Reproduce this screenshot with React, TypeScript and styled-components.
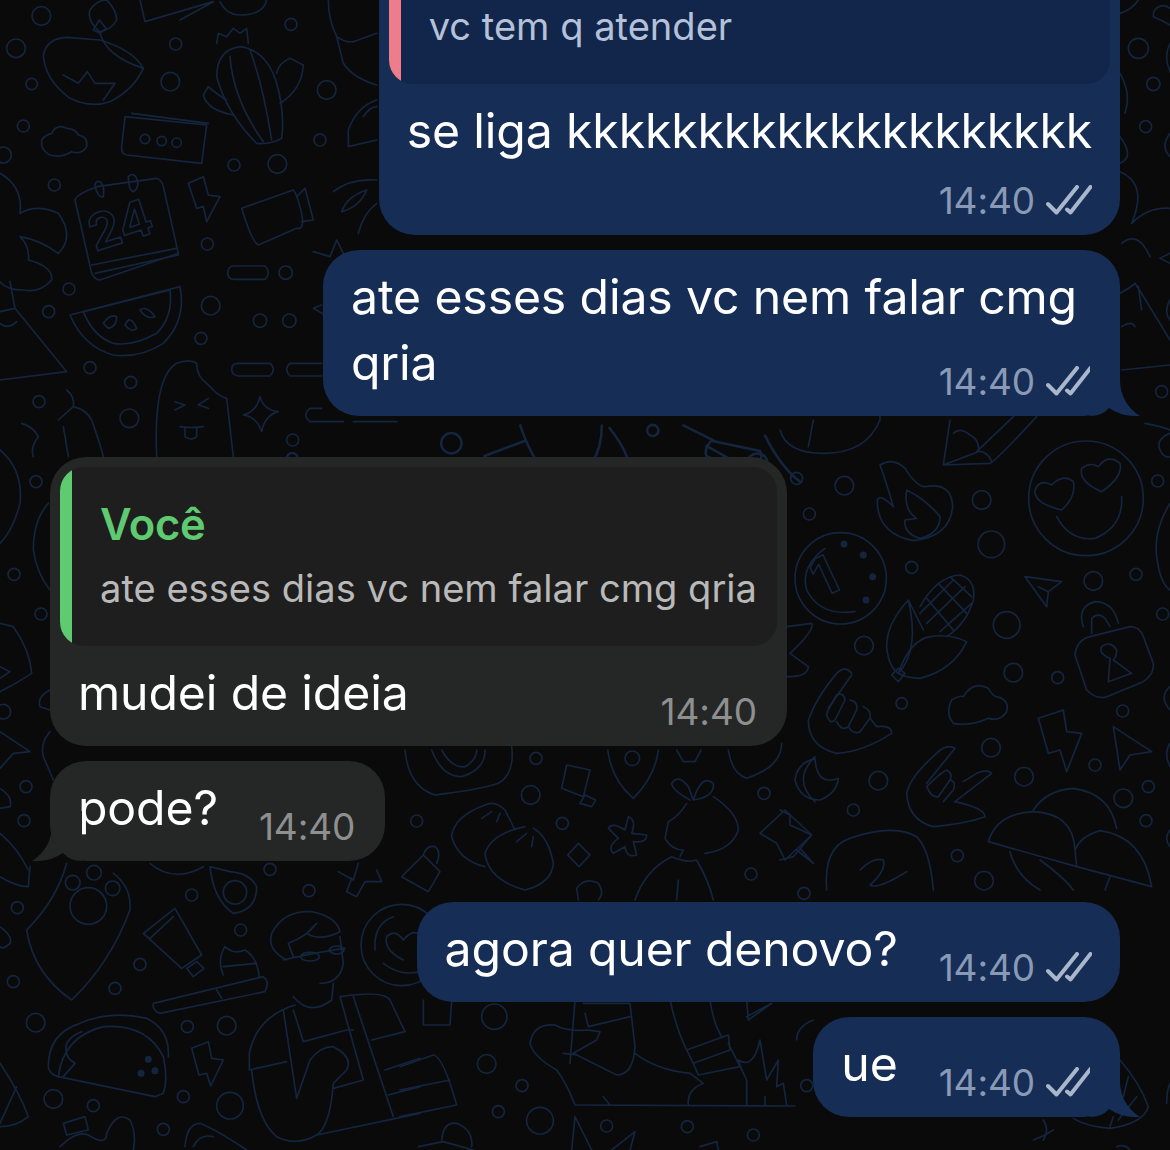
import React from 'react';
import styled, { createGlobalStyle } from 'styled-components';

type Side = 'in' | 'out';
type PatternGroup = {
    at: [number, number];
    scale?: number;
    circles?: Array<[number, number, number]>;
    dots?: Array<[number, number, number]>;
    paths: string[];
};

const THIRD = 1 / 3;

// doodles of the chat wallpaper, each group in the coordinates of its own crop
const PATTERN: PatternGroup[] = [
    {
        at: [0, 0],
        circles: [[124, 48, 28], [48, 145, 28], [95, 252, 17], [527, 132, 18], [511, 245, 28], [873, 73, 18], [980, 270, 28], [70, 378, 18], [702, 495, 18], [832, 492, 28], [960, 420, 18], [163, 555, 18], [622, 732, 18], [857, 818, 20], [207, 867, 18], [146, 935, 18], [632, 917, 28], [780, 962, 20], [868, 962, 20], [603, 1015, 18], [270, 1103, 18], [392, 1147, 18], [117, 1205, 18], [388, 1255, 28], [878, 1320, 18], [435, 417, 14], [485, 423, 14], [530, 428, 14], [10, 465, 24]],
        paths: [
            'M130 165Q140 115 200 112L300 120Q400 150 430 205Q400 270 330 305Q270 325 210 295Q135 240 130 165Z',
            'M298 95Q260 60 270 30Q290 0 320 0Q350 30 350 60Q335 90 298 95',
            'M280 90L298 60L318 85L300 100Z',
            'M190 225L235 250L262 215L285 250L345 250L310 300',
            'M300 100Q320 170 430 205',
            'M420 0L435 65L640 5M540 60L640 5M660 5Q680 45 720 45Q790 45 800 0',
            'M770 430Q680 340 650 230Q650 150 720 140Q800 150 830 250Q855 340 845 415Q810 435 770 430Z',
            'M690 170Q700 300 790 425M750 150Q790 260 815 420',
            'M700 345Q620 330 610 285L625 260Q660 290 680 300M840 310Q905 270 910 195L870 175Q835 190 830 220',
            'M650 130L655 100L680 110L700 85L720 100L740 85L745 130',
            'M375 350L620 375L605 490L380 465Q362 460 365 440ZM395 340L625 370',
            'M150 465Q120 450 125 420Q135 405 155 400Q170 370 200 385Q225 385 235 405Q265 410 260 440Q245 465 215 455Q180 475 150 465Z',
            'M225 600Q225 585 290 560L470 535Q485 540 490 560L535 760L300 840Q285 840 275 820Z',
            'M275 795L530 745M285 820L535 765',
            'M285 560Q285 540 300 545Q315 555 310 590Q295 595 285 560M385 530Q400 515 410 535Q420 565 400 575Q385 570 385 530',
            'M565 550L610 530L625 585L660 590L620 665L610 620L590 625Z',
            'M725 625L880 570Q890 580 905 640Q915 690 890 685L775 735Q755 725 725 625ZM890 590L915 565L940 660L905 665',
            'M1130 300Q1070 320 1045 390L1045 440L1130 420M1090 350Q1110 320 1130 320',
            'M1000 575Q1050 535 1130 540M1025 635Q1040 590 1100 570Q1080 620 1025 635M1075 700Q1090 640 1130 610',
            'M940 755L990 770L1010 720L1040 780',
            'M985 0Q985 60 1010 110Q1040 130 1060 125L1130 100M1030 190Q1060 235 1130 255M1010 110L1030 190',
            'M940 925L975 945M940 925L965 915',
            'M210 945L540 860Q560 960 490 1030Q420 1075 340 1065Q250 1040 210 945Z',
            'M250 935L510 870Q520 950 470 1000Q400 1040 340 1030Q280 1010 250 935Z',
            'M310 970Q330 940 350 950Q350 980 325 985ZM375 975Q390 940 410 985Q395 1000 375 975ZM420 930Q440 915 465 950Q440 960 420 930Z',
            'M0 520Q70 560 60 640M60 640Q110 610 175 640Q225 710 175 760Q120 720 60 710Q90 740 85 780M85 780Q160 800 155 840Q120 880 70 870Q20 870 0 845',
            'M0 935L45 925L200 1115L0 1140M30 845L45 925',
            'M0 970Q25 990 50 965',
            'M695 1108Q695 1090 715 1090L810 1090Q830 1108 810 1128L715 1128Q695 1125 695 1108ZM965 1090L870 1090Q850 1108 870 1128L965 1128',
            'M683 818Q683 798 703 798L795 798Q815 818 795 838L703 838Q683 838 683 818Z',
            'M965 1225L930 1225Q905 1245 930 1265L1030 1265M1060 1265L1190 1265',
            'M470 1370Q460 1130 530 1090Q570 1075 590 1090Q590 1130 620 1150L640 1170Q660 1190 680 1195Q690 1280 700 1370',
            'M525 1205L555 1215L525 1230M625 1195L595 1215L625 1225M540 1280Q570 1285 610 1280M555 1285L555 1310Q575 1325 590 1310L590 1285',
            'M780 1190Q790 1230 835 1235Q795 1245 785 1295Q770 1250 730 1245Q770 1235 780 1190Z',
            'M200 1170Q225 1190 220 1220Q260 1230 275 1260Q300 1330 310 1370M175 1260L220 1220M190 1280L205 1370',
            'M65 1270Q100 1280 115 1310Q90 1340 100 1370'
        ]
    },
    {
        at: [0, 405],
        scale: 0.51,
        circles: [[885, 75, 20], [573, 105, 11], [703, 138, 11], [1280, 50, 11], [1297, 140, 20], [1485, 115, 20]],
        paths: [
            'M735 155L735 135Q745 120 765 120L800 120Q815 130 815 155',
            'M1020 40Q1050 130 1100 155Q1180 130 1180 40M950 100L1030 70M950 100L985 155M1195 45Q1240 100 1240 155',
            'M1385 80L1475 130Q1500 110 1490 90L1395 70Q1380 85 1385 100L1470 140',
            'M1340 40L1400 70M1500 60Q1530 120 1568 150'
        ]
    },
    {
        at: [780, 410],
        circles: [[50, 205, 18], [193, 227, 28], [88, 312, 18], [605, 270, 28], [634, 403, 40], [395, 472, 18], [940, 513, 28], [1068, 493, 18], [1133, 213, 18], [1148, 612, 18], [680, 645, 40], [252, 707, 28], [700, 788, 28], [833, 803, 18], [365, 880, 17], [1028, 903, 18], [633, 1013, 28], [945, 1065, 18], [732, 1100, 28], [295, 1112, 28], [1105, 1130, 18], [1030, 1165, 28], [220, 1200, 18], [1098, 1232, 18], [532, 1337, 18], [612, 1412, 28], [918, 265, 172], [182, 505, 137]],
        dots: [[192, 402, 8], [250, 435, 8], [278, 500, 8], [258, 570, 8]],
        paths: [
            'M845 300Q760 280 765 240Q780 205 815 225Q850 190 880 215Q890 260 845 300Z',
            'M965 245Q895 215 905 175Q930 155 955 170Q985 130 1020 160Q1030 200 965 245Z',
            'M830 320Q870 395 945 385Q1030 350 1025 260',
            'M300 165Q340 140 375 175Q410 230 435 230Q515 215 518 290Q510 380 400 392Q290 370 292 270Q300 250 340 290Q320 220 300 165Z',
            'M380 240Q440 270 480 320Q480 370 420 385Q370 370 375 330L410 325Q370 300 380 240',
            'M135 415Q60 470 80 540Q120 620 225 605',
            'M420 590Q470 500 540 495Q590 510 580 570Q560 640 500 680',
            'M440 565L520 660M475 520L560 610M510 500L575 560M420 610L520 510M440 640L555 530M480 665L575 580',
            'M385 570Q320 640 320 710Q325 770 355 790Q420 720 385 570ZM385 570L430 660',
            'M355 790Q390 690 450 680Q510 670 560 695Q520 780 420 805Q380 805 355 790M335 795L355 815L375 790L355 775Z',
            'M735 500L845 515L805 545L800 590ZM805 545L775 530',
            'M910 650Q890 590 945 575Q1000 575 1015 640M935 670L935 625Q955 605 975 625L990 650',
            'M885 735Q890 690 930 680L1050 650Q1080 650 1090 680L1120 760Q1125 790 1090 815L980 860Q950 870 920 840Z',
            'M990 745Q955 730 965 710Q990 690 1010 720Q1010 740 1000 750L1055 790L985 815Z',
            'M520 940Q495 910 515 870Q540 855 550 860Q580 810 625 835Q640 860 650 860Q690 870 680 905Q660 935 625 925Q570 950 520 940Z',
            'M775 925L850 900L860 965L905 970L860 1085L840 1020L805 1030Z',
            'M1000 950L1115 1025L1050 1035L1020 1080Z',
            'M215 790Q195 765 170 790Q110 860 85 930Q85 1010 170 1030Q250 1025 335 970Q335 945 290 950L270 925M215 795L145 895',
            'M170 855Q190 845 195 870L165 930Q150 945 140 915Q140 905 170 855ZM210 870Q235 875 230 900L205 950Q185 965 170 935M250 890Q275 900 270 925L240 965Q220 975 205 950',
            'M525 1015Q500 1000 470 1030Q390 1100 380 1150Q385 1230 460 1250Q560 1240 615 1220Q615 1195 525 1175M525 1015L440 1120',
            'M525 1175L635 1090Q620 1075 590 1090L550 1115M440 1130Q480 1090 500 1080Q520 1090 510 1110L475 1160Q455 1165 440 1130M510 1110Q530 1115 520 1140L490 1175',
            'M105 1045Q50 1060 45 1110Q60 1170 120 1170Q170 1150 175 1105Q110 1130 105 1045Z',
            'M0 1200L30 1215L30 1245L95 1275L40 1340L0 1350M60 1315L100 1360',
            'M140 1440Q130 1310 210 1285Q340 1240 410 1280Q450 1320 460 1440',
            'M240 1380Q280 1340 310 1350Q320 1380 270 1425Q290 1440 380 1385',
            'M760 1200Q800 1140 880 1135Q990 1150 1010 1255',
            'M625 1295Q650 1210 760 1205Q880 1210 885 1320L890 1370L625 1295Z',
            'M885 1320Q900 1280 960 1262Q1090 1280 1115 1430L890 1370',
            'M690 1325Q710 1400 780 1440M780 1350Q850 1400 880 1440M990 1400L975 1440',
            'M20 650L95 640Q105 660 30 730L85 770Q85 800 20 800',
            'M0 60Q20 130 130 130Q260 130 300 30L300 20M100 30L85 110',
            'M510 30L490 165L630 160Q650 150 770 20M520 70Q540 50 570 75Q600 90 595 125L490 165M590 125Q620 120 635 155M700 20L590 125',
            'M1170 280Q1120 360 1130 440Q1140 520 1170 540M1170 1000Q1150 1030 1170 1070M1170 1260Q1150 1285 1170 1310M1170 830Q1135 860 1170 900',
            'M1095 40Q1150 50 1170 60M1170 70Q1120 90 1145 130Q1160 145 1170 140'
        ]
    },
    {
        at: [0, 860],
        circles: [[52, 143, 18], [40, 365, 18], [420, 313, 18], [345, 385, 18], [575, 105, 18], [722, 210, 18], [927, 92, 18], [810, 28, 18], [107, 488, 28], [562, 500, 18], [680, 497, 28], [160, 717, 28], [280, 737, 18], [550, 710, 18], [690, 737, 40], [490, 808, 18], [218, 68, 22], [282, 38, 22], [338, 85, 22], [265, 138, 55], [705, 97, 35], [1205, 255, 122]],
        dots: [[445, 598, 8], [423, 640, 8], [465, 632, 8]],
        paths: [
            'M200 10Q170 120 80 210Q100 340 215 420Q330 310 390 150Q395 80 340 40',
            'M630 20Q640 120 700 160Q770 150 770 80Q750 40 690 35L630 20M450 10Q520 70 610 20',
            'M430 220L525 145L605 285L545 325ZM450 235L520 170M560 325L590 305L612 325L580 350Z',
            'M460 430L790 350Q810 365 795 395L480 460Q455 450 460 430ZM650 390L665 415',
            'M670 345Q650 300 675 260Q700 285 735 270Q770 290 778 350M670 320Q720 315 770 310',
            'M175 650Q190 530 310 500Q440 490 490 590Q505 660 490 700L465 710Z',
            'M145 620Q145 520 240 490Q330 450 440 475Q510 510 505 590M175 650Q145 640 145 620M190 650L225 610Q190 590 200 550Q215 525 245 515',
            'M575 565L625 545L635 595L670 600L632 678L620 640L597 645Z',
            'M860 300Q800 270 815 220Q850 150 935 155Q1010 170 1020 215Q960 245 920 220L950 190Q920 230 865 250L880 290',
            'M1020 230L1030 310Q1020 370 960 370M880 410Q930 470 995 420L1000 370',
            'M850 300Q930 280 1035 265M902 290a28 13 0 1 0 56 0a28 13 0 1 0 -56 0M988 270a22 12 0 1 0 44 0a22 12 0 1 0 -44 0',
            'M885 435Q770 470 748 580L748 630L860 605',
            'M850 450L890 715L930 600Q960 560 1000 560Q1060 590 1040 630L1000 670Q990 800 950 825Q890 860 830 830Q770 780 755 630',
            'M1020 410L1090 660L1000 685M1020 410Q1150 390 1170 420L1215 515L1115 540M1060 410L1180 770M950 825L1260 760',
            'M880 450L910 545L1040 510L1060 510M1155 630L1260 595M1165 705L1260 680',
            'M1210 300Q1150 270 1160 230Q1185 205 1210 240Q1240 205 1260 225M1125 270Q1120 190 1180 170M1150 310Q1200 350 1260 335',
            'M1015 35L1060 60L1075 10M1130 30L1145 65L1095 65L1070 110L1040 95L1055 55',
            'M0 610Q60 700 85 770Q50 800 0 800M50 680L0 790',
            'M190 790L255 770L265 810L200 825ZM180 860Q230 810 265 825Q320 860 320 820Q350 750 390 780Q410 820 400 870',
            'M555 860Q560 790 600 790Q650 810 740 870M580 860Q600 820 640 830',
            'M0 200Q40 230 30 250Q10 270 0 260M0 50Q50 80 85 80L90 20'
        ]
    },
    {
        at: [385, 740],
        circles: [[453, 55, 18], [437, 165, 28], [95, 243, 18], [532, 250, 18], [742, 55, 22], [1137, 160, 18], [1098, 402, 18], [1257, 460, 18]],
        paths: [
            'M60 30Q70 140 150 165Q280 150 340 130Q390 100 380 20M140 30Q170 110 230 110Q300 90 300 30M170 30Q200 85 240 80Q275 60 275 30',
            'M545 75L615 90L595 170L530 145ZM600 165L632 180L620 200L585 190ZM580 310L615 345L582 380L548 345Z',
            'M668 30Q680 120 745 175Q810 110 820 30M875 30L895 65L930 65L948 30',
            'M300 195Q205 230 200 290Q220 360 300 380M300 195Q330 180 360 210L390 270',
            'M420 260Q320 280 300 340Q310 420 420 450Q500 430 505 370Q490 290 445 265',
            'M320 215L290 235M345 220L335 245M425 280L395 305M445 290L440 320',
            'M730 230Q755 240 740 280L785 285Q785 310 745 305L755 345Q725 355 720 320L685 340Q665 320 700 295L670 265Q680 245 720 270Z',
            'M915 180Q860 150 860 130Q880 100 910 140L925 180Q950 100 985 130Q990 170 925 180',
            'M985 170Q1060 220 1060 270Q1040 330 960 340M905 190Q880 230 850 245L840 295Q860 330 895 330L885 350',
            'M750 480Q780 390 860 350Q910 370 935 360Q970 420 985 480M880 420L875 480',
            'M1200 210L1280 285L1200 360L1175 310L1125 280ZM1235 330L1285 370',
            'M50 410L115 345L165 395L130 455ZM115 345Q125 315 150 320Q170 335 155 370',
            'M1030 30Q1040 100 1085 115Q1190 80 1190 10M1290 50Q1220 120 1290 185',
            'M580 480L575 445Q600 410 640 430Q660 460 640 480'
        ]
    },
    {
        at: [400, 1000],
        circles: [[283, 50, 38], [260, 192, 28], [366, 257, 18], [295, 335, 18], [420, 362, 40], [620, 378, 18], [862, 380, 18], [1060, 405, 18], [1220, 257, 18]],
        paths: [
            'M70 0L70 75L150 75L155 0M0 200L100 165Q130 170 170 315L0 350M0 270L150 240',
            'M525 315Q500 250 470 210Q400 170 390 130Q400 70 465 75Q500 95 560 90L600 95L590 120L520 160M525 0L510 190M490 160L530 165',
            'M550 10L690 10L705 140Q700 225 650 225L520 160M555 40L565 80L690 50M525 315L1185 318M610 290L630 315',
            'M705 160Q770 210 870 220L910 250Q860 270 865 315M860 150L985 105L990 150L880 190ZM810 0Q830 90 860 150M930 0Q940 70 965 110M880 190L895 225L1020 200L985 130',
            'M1040 315L1040 240Q1020 200 1015 180Q1060 210 1080 120L1100 240L1135 180L1130 260L1150 250L1160 315M1095 290L1095 315',
            'M515 450L525 350L575 450M635 450L705 395L690 450M900 440L950 425L955 450M55 440L130 425L220 450M125 420Q130 365 170 370Q220 390 215 440',
            'M1040 50L1115 10M1040 0L1045 60L1115 10M1190 120Q1190 80 1240 60'
        ]
    },
    {
        at: [1030, 1040],
        paths: [
            'M270 60Q330 130 355 200Q340 250 240 265Q170 260 130 235M295 110L280 170M320 170L265 240M250 230L240 260',
            'M410 190Q410 150 420 130M40 240Q60 270 40 300M70 270Q40 290 10 300M260 320Q285 310 300 330'
        ]
    },
    {
        at: [1105, 0],
        circles: [[100, 145, 30], [145, 252, 20], [122, 380, 18], [170, 1175, 18]],
        paths: [
            'M145 50a30 30 0 0 1 50 -25M195 75Q170 60 145 50M45 40Q80 30 100 0M195 130Q175 170 195 215',
            'M45 220Q80 280 60 340M45 410Q90 470 45 490M45 515Q130 550 80 670M80 670Q130 620 195 625M195 400Q165 440 195 470',
            'M50 730Q100 690 135 770M45 880Q80 860 90 850Q110 880 195 1020M100 860L110 930M50 980Q80 960 90 980M50 1110L195 1095',
            'M195 760L165 775L195 790M195 900Q175 935 195 960'
        ]
    },
    {
        at: [0, 450],
        circles: [[108, 95, 18], [42, 373, 18], [123, 492, 18], [78, 1010, 18], [72, 1112, 18], [10, 785, 22]],
        paths: [
            'M0 0Q70 60 60 160Q40 240 0 280M145 160Q100 210 100 300Q110 370 150 420',
            'M0 520L40 530Q90 600 95 670Q50 700 0 725M0 650L30 665L0 685M150 720Q110 740 120 770L150 780',
            'M0 845L90 905L40 910L0 955M150 845Q120 880 130 920L160 990M0 1015Q40 1040 30 1070L0 1075M0 1150Q50 1190 85 1260'
        ]
    }
];

const GlobalStyle = createGlobalStyle`
    html, body {
        margin: 0;
        padding: 0;
        background: #0a0a0b;
    }
`;

const Screen = styled.div`
    position: relative;
    width: 1170px;
    height: 1150px;
    overflow: hidden;
    background: #0a0a0b;
    font-family: Inter, "Liberation Sans", sans-serif;
    color: #fff;
`;

const Wallpaper = styled.svg`
    position: absolute;
    inset: 0;
    fill: none;
    stroke: #14253f;
    stroke-width: 5;
    stroke-linecap: round;
    stroke-linejoin: round;
`;

const Doodle = styled.text<{ $size: number }>`
    font-family: Inter, sans-serif;
    font-weight: 700;
    font-size: ${(p) => p.$size}px;
`;

const Chat = styled.main`
    position: relative;
    height: 1150px;
    box-sizing: border-box;
    padding: 0 50px 33px 50px;
    display: flex;
    flex-direction: column;
    justify-content: flex-end;
`;

const Row = styled.div<{ $side: Side; $gap?: number }>`
    flex: none;
    display: flex;
    justify-content: ${(p) => (p.$side === 'out' ? 'flex-end' : 'flex-start')};
    margin-top: ${(p) => p.$gap ?? 15}px;
`;

const Bubble = styled.div<{ $side: Side; $quoted?: boolean }>`
    position: relative;
    box-sizing: border-box;
    border-radius: 36px;
    padding: ${(p) => (p.$quoted ? '10px 10px 20px' : '14px 28px 20px 28px')};
    background: ${(p) => (p.$side === 'out' ? '#162d55' : '#252626')};
`;

const Line = styled.div`
    display: flex;
    justify-content: space-between;
    gap: 41px;
`;

const QuotedBody = styled.div`
    padding: 14px 18px 0 18px;
`;

const Stacked = styled.div<{ $width: number }>`
    display: grid;
    width: ${(p) => p.$width}px;
    & > * {
        grid-area: 1 / 1;
    }
`;

const MessageText = styled.div`
    font-size: 48.2px;
    line-height: 66px;
    white-space: nowrap;
    letter-spacing: -0.15px;
`;

const Meta = styled.div<{ $side: Side }>`
    display: flex;
    align-items: center;
    justify-content: flex-end;
    gap: 11px;
    height: 30px;
    align-self: end;
    justify-self: end;
    font-size: 37px;
    letter-spacing: -0.1px;
    color: ${(p) => (p.$side === 'out' ? '#8a9ab6' : '#8e8f8f')};
    margin-right: ${(p) => (p.$side === 'out' ? 0 : 2)}px;
`;

const MetaRow = styled(Meta)`
    margin-top: 21px;
`;

const Ticks = styled.svg`
    width: 46px;
    height: 30px;
    fill: none;
    stroke: #a9b6cb;
    stroke-width: 4;
    stroke-linecap: round;
    stroke-linejoin: round;
`;

const Tail = styled.svg<{ $side: Side }>`
    position: absolute;
    bottom: 0;
    width: 50px;
    height: 50px;
    fill: ${(p) => (p.$side === 'out' ? '#162d55' : '#252626')};
    ${(p) => (p.$side === 'out' ? 'right: -20px;' : 'left: -18px; transform: scaleX(-1);')}
`;

const Quote = styled.div<{ $side: Side }>`
    display: flex;
    height: 179px;
    box-sizing: border-box;
    border-radius: 24px;
    overflow: hidden;
    background: ${(p) => (p.$side === 'out' ? '#11264a' : '#1e1e1e')};
`;

const QuoteBar = styled.div<{ $color: string }>`
    flex: none;
    width: 12px;
    background: ${(p) => p.$color};
`;

const QuoteBody = styled.div`
    display: flex;
    flex-direction: column;
    justify-content: flex-end;
    padding: 29px 20px 33px 28px;
`;

const QuoteName = styled.div`
    font-size: 43.5px;
    line-height: 56px;
    font-weight: 600;
    color: #5fcb70;
    letter-spacing: -0.3px;
`;

const QuoteText = styled.div<{ $side: Side }>`
    margin-top: 11px;
    font-size: 38.1px;
    line-height: 50px;
    white-space: nowrap;
    color: ${(p) => (p.$side === 'out' ? '#b4c1d8' : '#b9b9b9')};
`;

const DoubleCheck = (): JSX.Element => (
    <Ticks viewBox="0 0 46 30">
        <path d="M2 19L10.5 27.5L31 2" />
        <path d="M21 24.5L24.5 27.5L44.5 2" />
    </Ticks>
);

const BubbleTail = ({ side }: { side: Side }): JSX.Element => (
    <Tail $side={side} viewBox="0 0 50 50">
        <path d="M0 0L30 0L30 15Q31 38 50 50Q32 51 19 42Q12 50 0 50Z" />
    </Tail>
);

const Time = ({ side }: { side: Side }): JSX.Element => (
    <Meta $side={side}>
        14:40
        {side === 'out' && <DoubleCheck />}
    </Meta>
);

const Background = (): JSX.Element => (
    <Wallpaper viewBox="0 0 1170 1150" width="1170" height="1150">
        {PATTERN.map((g, i) => (
            <g key={i} transform={`translate(${g.at[0]} ${g.at[1]}) scale(${g.scale ?? THIRD})`}>
                {(g.circles ?? []).map(([cx, cy, r], k) => <circle key={k} cx={cx} cy={cy} r={r} />)}
                {(g.dots ?? []).map(([cx, cy, r], k) => <circle key={k} cx={cx} cy={cy} r={r} fill="#14253f" />)}
                {g.paths.map((d, k) => <path key={k} d={d} />)}
            </g>
        ))}
        <g transform={`scale(${THIRD})`}>
            <Doodle $size={150} x="285" y="755" transform="rotate(-18 285 755)">24</Doodle>
            <Doodle $size={160} x="2465" y="1795" transform="rotate(-25 2465 1795)">1</Doodle>
        </g>
    </Wallpaper>
);

const App = (): JSX.Element => (
    <Screen>
        <GlobalStyle />
        <Background />
        <Chat>
            <Row $side="out">
                <Bubble $side="out" $quoted>
                    <Quote $side="out">
                        <QuoteBar $color="#ee7d8b" />
                        <QuoteBody>
                            <QuoteText $side="out">vc tem q atender</QuoteText>
                        </QuoteBody>
                    </Quote>
                    <QuotedBody>
                        <MessageText>se liga kkkkkkkkkkkkkkkkkkkk</MessageText>
                        <MetaRow $side="out">
                            14:40
                            <DoubleCheck />
                        </MetaRow>
                    </QuotedBody>
                </Bubble>
            </Row>
            <Row $side="out">
                <Bubble $side="out">
                    <Stacked $width={741}>
                        <MessageText>ate esses dias vc nem falar cmg<br />qria</MessageText>
                        <Time side="out" />
                    </Stacked>
                    <BubbleTail side="out" />
                </Bubble>
            </Row>
            <Row $side="in" $gap={41}>
                <Bubble $side="in" $quoted>
                    <Quote $side="in">
                        <QuoteBar $color="#5fcb70" />
                        <QuoteBody>
                            <QuoteName>Você</QuoteName>
                            <QuoteText $side="in">ate esses dias vc nem falar cmg qria</QuoteText>
                        </QuoteBody>
                    </Quote>
                    <QuotedBody>
                        <Line>
                            <MessageText>mudei de ideia</MessageText>
                            <Time side="in" />
                        </Line>
                    </QuotedBody>
                </Bubble>
            </Row>
            <Row $side="in">
                <Bubble $side="in">
                    <Line>
                        <MessageText>pode?</MessageText>
                        <Time side="in" />
                    </Line>
                    <BubbleTail side="in" />
                </Bubble>
            </Row>
            <Row $side="out" $gap={41}>
                <Bubble $side="out">
                    <Line>
                        <MessageText>agora quer denovo?</MessageText>
                        <Time side="out" />
                    </Line>
                </Bubble>
            </Row>
            <Row $side="out">
                <Bubble $side="out">
                    <Line>
                        <MessageText>ue</MessageText>
                        <Time side="out" />
                    </Line>
                    <BubbleTail side="out" />
                </Bubble>
            </Row>
        </Chat>
    </Screen>
);

export default App;
